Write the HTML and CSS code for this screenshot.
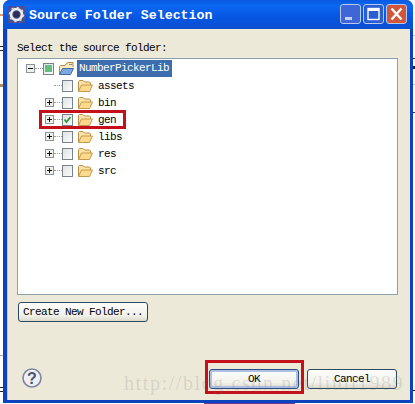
FILE: index.html
```html
<!DOCTYPE html>
<html lang="en">
<head>
<meta charset="utf-8">
<title>Source Folder Selection</title>
<link rel="stylesheet" href="styles.css">
</head>
<body>
<svg class="defs" width="0" height="0">
  <symbol id="folder" viewBox="0 0 16 14">
    <path d="M1.5 12.5V2.5L2.5 1.5H6L7.5 3H12.5L13.5 4V6" fill="#fbe3a6" stroke="#b98f45"/>
    <path d="M1.5 12.5L4.5 6H15.5L12.5 12.5Z" fill="#fcd98c" stroke="#c29a50"/>
  </symbol>
  <symbol id="project" viewBox="0 0 16 14">
    <path d="M1.5 12.5V4.5L2.5 3.5H7L8 2L10 .5H15V5" fill="#fbe9b8" stroke="#a88a4a"/>
    <path d="M11 2.5H14" stroke="#7a8fb0"/>
    <path d="M1.5 12.5L4.5 6.5H15.5L12.5 12.5Z" fill="#7fa8dc" stroke="#3f6aa8"/>
  </symbol>
  <symbol id="plus" viewBox="0 0 9 9">
    <rect x=".5" y=".5" width="8" height="8" fill="#f0f0ea" stroke="#8a949c"/>
    <path d="M2 4.5H7M4.5 2V7" stroke="#111"/>
  </symbol>
  <symbol id="minus" viewBox="0 0 9 9">
    <rect x=".5" y=".5" width="8" height="8" fill="#f0f0ea" stroke="#8a949c"/>
    <path d="M2 4.5H7" stroke="#111"/>
  </symbol>
</svg>
<div class="edge edge-left"></div>
<div class="edge edge-right"></div>
<div class="edge-bottom"></div>
<div class="window">
  <header class="titlebar">
    <svg class="app-icon" width="17" height="17" viewBox="0 0 17 17">
      <rect width="17" height="17" fill="#47509a"/>
      <circle cx="8.5" cy="8.5" r="5.5" fill="none" stroke="#f0eee8" stroke-width="2.6"/>
      <circle cx="8.5" cy="8.5" r="7" fill="none" stroke="#d8d4cc" stroke-width="1.6" stroke-dasharray="2.2 3.3"/>
      <circle cx="8.5" cy="8.5" r="3.2" fill="#2b2d58"/>
    </svg>
    <span class="title">Source Folder Selection</span>
    <div class="controls">
      <div class="ctl ctl-min"><svg width="21" height="20" viewBox="0 0 21 20"><rect x="5" y="13" width="7" height="3" fill="#c4d0f0"/></svg></div>
      <div class="ctl ctl-max"><svg width="21" height="20" viewBox="0 0 21 20"><rect x="5" y="4.5" width="11" height="11" fill="none" stroke="#fff" stroke-width="1.4"/><rect x="5" y="4" width="11" height="3" fill="#fff"/></svg></div>
      <div class="ctl ctl-close"><svg width="21" height="20" viewBox="0 0 21 20"><path d="M5.5 4.5L15.5 15.5M15.5 4.5L5.5 15.5" stroke="#fff" stroke-width="2.4"/></svg></div>
    </div>
  </header>
  <main class="client">
    <p class="prompt">Select the source folder:</p>
    <div class="tree">
      <div class="row root">
        <svg class="exp" width="9" height="9"><use href="#minus"/></svg>
        <span class="dash"></span>
        <span class="check check-partial"><i></i></span>
        <svg class="folder" width="16" height="14"><use href="#project"/></svg>
        <span class="label selected">NumberPickerLib</span>
      </div>
      <div class="row child">
        <span class="exp-none"></span>
        <span class="dash"></span>
        <span class="check"></span>
        <svg class="folder" width="16" height="14"><use href="#folder"/></svg>
        <span class="label">assets</span>
      </div>
      <div class="row child">
        <svg class="exp" width="9" height="9"><use href="#plus"/></svg>
        <span class="dash"></span>
        <span class="check"></span>
        <svg class="folder" width="16" height="14"><use href="#folder"/></svg>
        <span class="label">bin</span>
      </div>
      <div class="row child">
        <svg class="exp" width="9" height="9"><use href="#plus"/></svg>
        <span class="dash"></span>
        <span class="check"><svg width="11" height="11" viewBox="0 0 11 11"><path d="M2.5 5.5L4.5 8L8.5 3" fill="none" stroke="#2f9a3c" stroke-width="1.8"/></svg></span>
        <svg class="folder" width="16" height="14"><use href="#folder"/></svg>
        <span class="label">gen</span>
      </div>
      <div class="row child">
        <svg class="exp" width="9" height="9"><use href="#plus"/></svg>
        <span class="dash"></span>
        <span class="check"></span>
        <svg class="folder" width="16" height="14"><use href="#folder"/></svg>
        <span class="label">libs</span>
      </div>
      <div class="row child">
        <svg class="exp" width="9" height="9"><use href="#plus"/></svg>
        <span class="dash"></span>
        <span class="check"></span>
        <svg class="folder" width="16" height="14"><use href="#folder"/></svg>
        <span class="label">res</span>
      </div>
      <div class="row child">
        <svg class="exp" width="9" height="9"><use href="#plus"/></svg>
        <span class="dash"></span>
        <span class="check"></span>
        <svg class="folder" width="16" height="14"><use href="#folder"/></svg>
        <span class="label">src</span>
      </div>
    </div>
    <div class="create-row"><button class="btn btn-create">Create New Folder...</button></div>
    <footer class="footer">
      <svg class="help" width="20" height="20" viewBox="0 0 20 20">
        <circle cx="10" cy="10" r="9" fill="#eef0f4" stroke="#7d87a4" stroke-width="1.6"/>
        <text x="10" y="15.5" text-anchor="middle" class="help-q">?</text>
      </svg>
      <div class="actions">
        <button class="btn btn-ok">OK</button>
        <button class="btn">Cancel</button>
      </div>
    </footer>
  </main>
</div>
<div class="mark mark-gen"></div>
<div class="mark mark-ok"></div>
<div class="watermark">http://blog.csdn.net/liuli1989</div>
</body>
</html>
```
FILE: styles.css
```css
* { box-sizing: border-box; }
html, body { margin: 0; padding: 0; }
body {
  position: relative;
  width: 415px;
  height: 404px;
  overflow: hidden;
  background: #fff;
  font-family: "Liberation Mono", monospace;
  color: #000;
  padding: 0 2px 1px 3px;
}
.defs { position: absolute; }
.edge { position: absolute; top: 0; width: 3px; height: 404px; }
.edge-left {
  left: 0;
  background: linear-gradient(#fff 14px, #e09a6a 14px, #e09a6a 16px, #fff 16px,
    #fff 46px, #222 46px, #222 47px, #fff 47px, #fff 50px, #222 50px, #222 51px, #fff 51px,
    #fff 84px, #b08a60 84px, #b08a60 87px, #fff 87px,
    #fff 355px, #aaa 355px, #aaa 356px, #fff 356px,
    #fff 387px, #222 387px, #222 388px, #fff 388px, #fff 391px, #222 391px, #222 392px, #fff 392px);
}
.edge-right {
  right: 0;
  width: 2px;
  background: linear-gradient(#fff 35px, #bbb 35px, #bbb 36px, #fff 36px,
    #fff 58px, #333 58px, #333 59px, #fff 59px,
    #fff 66px, #222 66px, #222 69px, #fff 69px,
    #fff 84px, #bbb 84px, #bbb 85px, #fff 85px,
    #fff 112px, #333 112px, #333 113px, #fff 113px,
    #fff 390px, #222 390px, #222 391px, #fff 391px);
}
.edge-bottom {
  position: absolute;
  left: 204px;
  top: 403px;
  width: 91px;
  height: 1px;
  background: #6a3a9a;
}
.window {
  height: 403px;
  width: 410px;
  display: flex;
  flex-direction: column;
  background: #0c43bc;
  border-radius: 7px 7px 0 0;
  padding: 0 3px 3px 4px;
}
.titlebar {
  height: 29px;
  flex: none;
  display: flex;
  align-items: center;
  margin: 0 -3px 0 -4px;
  padding: 0 6px 0 5px;
  background: linear-gradient(#0a5ae0, #0a68f2 20%, #0656e2 60%, #0a4fd0);
  border-radius: 7px 7px 0 0;
}
.app-icon { margin-right: 4px; }
.title {
  flex: 1;
  font-size: 13.3px;
  font-weight: bold;
  color: #fff;
  padding-top: 2px;
}
.controls { display: flex; gap: 2px; margin-top: -1px; }
.ctl {
  width: 21px;
  height: 20px;
  border: 1px solid #b8c8f0;
  border-radius: 3px;
  display: flex;
  align-items: center;
  justify-content: center;
  overflow: hidden;
}
.ctl svg { flex: none; }
.ctl-min { background: #3f66d6; }
.ctl-max { background: #2a5ed0; }
.ctl-close { background: #d2563a; }
.client {
  flex: 1;
  display: flex;
  flex-direction: column;
  background: #ece9d8;
  padding: 15px 12px 11px 9px;
  border-left: 1px solid #b8cdf0;
}
.prompt {
  margin: 0 0 6px;
  font-size: 11px;
  letter-spacing: -.6px;
  line-height: 8px;
  height: 8px;
}
.tree {
  height: 237px;
  background: #fff;
  border: 1px solid #8ba0a8;
  padding: 1px 0 0 8px;
  flex: none;
}
.row {
  height: 17px;
  display: flex;
  align-items: center;
  font-size: 11px;
  letter-spacing: -.6px;
}
.child { margin-left: 19px; }
.exp { flex: none; }
.exp-none { width: 9px; flex: none; }
.dash {
  width: 8px;
  flex: none;
  border-top: 1px dotted #999;
}
.check {
  width: 11px;
  height: 12px;
  flex: none;
  border: 1px solid #79838c;
  background: linear-gradient(135deg, #dfe3e6, #fcfcf9);
  display: flex;
  align-items: center;
  justify-content: center;
  position: relative;
}
.check svg { flex: none; }
.check-partial i {
  display: block;
  width: 7px;
  height: 7px;
  background: #65bf7c;
}
.folder { margin-left: 4px; flex: none; }
.label { margin-left: 5px; }
.root .label { margin-left: 3px; }
.selected {
  background: #3d6daf;
  color: #fff;
  width: 95px;
  height: 17px;
  line-height: 17px;
  padding-left: 2px;
}
.create-row { margin-top: 7px; flex: none; }
.btn {
  font-family: inherit;
  font-size: 11px;
  letter-spacing: -.6px;
  color: #000;
  width: 90px;
  height: 20px;
  padding: 0;
  border: 1px solid #2c4a5e;
  border-radius: 3px;
  background: linear-gradient(#fdfdfb, #f2f1ea 70%, #dcd9cb);
}
.btn-create { width: 130px; margin-left: 1px; }
.btn-ok {
  border-color: #2c4a7e;
  box-shadow: inset 0 0 0 2px #aebfe6;
}
.footer {
  margin-top: auto;
  display: flex;
  align-items: center;
  justify-content: space-between;
  padding: 0 1px 0 5px;
}
.help { margin-top: -2px; }
.actions { display: flex; gap: 8px; }
.help-q {
  font-family: "Liberation Sans", sans-serif;
  font-size: 16px;
  font-weight: bold;
  fill: #4a5470;
}
.mark {
  position: absolute;
  border: 3px solid #c4101a;
  pointer-events: none;
}
.mark-gen { left: 39px; top: 110px; width: 87px; height: 19px; }
.mark-ok { left: 205px; top: 360px; width: 99px; height: 34px; }
.watermark {
  position: absolute;
  left: 124px;
  top: 372px;
  font-family: "Liberation Serif", serif;
  font-size: 20px;
  letter-spacing: 1.6px;
  color: rgba(120, 120, 120, .2);
  white-space: nowrap;
  pointer-events: none;
}
```
